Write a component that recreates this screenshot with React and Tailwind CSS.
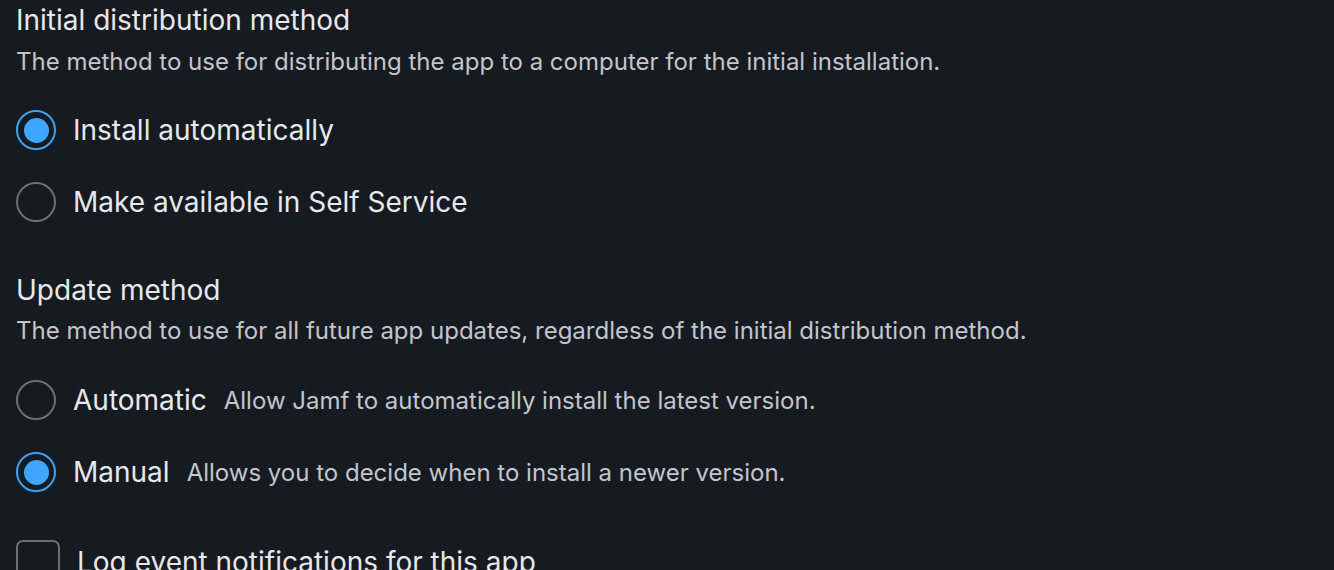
import React from "react";

function Radio({ checked }) {
  return checked ? (
    <span className="flex h-[40px] w-[40px] shrink-0 items-center justify-center rounded-full border-2 border-[#3aa3f5]">
      <span className="h-[25px] w-[25px] rounded-full bg-[#3ea6ff]" />
    </span>
  ) : (
    <span className="h-[40px] w-[40px] shrink-0 rounded-full border-2 border-[#6b6f76]" />
  );
}

function RadioRow({ checked, label, hint, className = "" }) {
  return (
    <div className={`flex h-[56px] items-center ${className}`}>
      <Radio checked={checked} />
      <span className="ml-[17px] text-[28px] leading-[40px] text-[#e6e8eb]">{label}</span>
      {hint && <span className="ml-[17px] mt-[2px] text-[24px] leading-[32px] text-[#c2c6cc]">{hint}</span>}
    </div>
  );
}

export default function App() {
  return (
    <div
      className="h-[570px] w-[1334px] overflow-hidden bg-[#161a21] pl-[16px]"
      style={{ fontFamily: "Inter, 'Liberation Sans', sans-serif" }}
    >
      <h2 className="h-[40px] text-[28px] leading-[40px] text-[#e6e8eb]">Initial distribution method</h2>
      <p className="mt-[6px] h-[32px] text-[24px] leading-[32px] text-[#c2c6cc]">
        The method to use for distributing the app to a computer for the initial installation.
      </p>
      <RadioRow checked label="Install automatically" className="mt-[24px]" />
      <RadioRow label="Make available in Self Service" className="mt-[16px]" />

      <h2 className="mt-[40px] h-[40px] text-[28px] leading-[40px] text-[#e6e8eb]">Update method</h2>
      <p className="mt-[5px] h-[32px] text-[24px] leading-[32px] text-[#c2c6cc]">
        The method to use for all future app updates, regardless of the initial distribution method.
      </p>
      <RadioRow
        label="Automatic"
        hint="Allow Jamf to automatically install the latest version."
        className="mt-[25px]"
      />
      <RadioRow
        checked
        label="Manual"
        hint="Allows you to decide when to install a newer version."
        className="mt-[16px]"
      />

      <div className="mt-[40px] flex items-start">
        <span className="h-[44px] w-[44px] shrink-0 rounded-[7px] border-2 border-[#6b6f76]" />
        <span className="ml-[17px] mt-[2px] text-[28px] leading-[40px] text-[#e6e8eb]">
          Log event notifications for this app
        </span>
      </div>
    </div>
  );
}
